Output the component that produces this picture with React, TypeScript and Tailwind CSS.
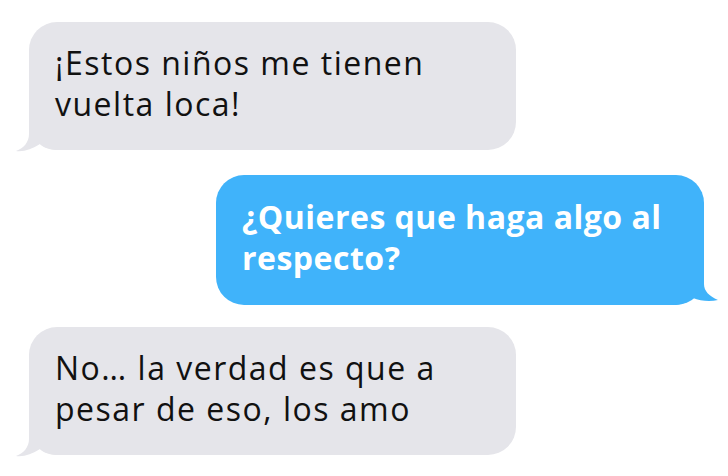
import React from "react";

const GrayTail = () => (
  <svg
    className="absolute left-[-15px] bottom-[-2px]"
    width="46"
    height="34"
    viewBox="0 0 46 34"
  >
    <path
      d="M15 0 L15 16 C15 24 10 30 2 33 C10 34 18 31 26 26 C30 30 36 32 46 32 L46 0 Z"
      fill="#e5e5ea"
    />
  </svg>
);

const BlueTail = () => (
  <svg
    className="absolute right-[-14px] bottom-0"
    width="46"
    height="34"
    viewBox="0 0 46 34"
  >
    <path
      d="M32 0 L32 13 C32 20 37 25 46 29 C38 31 28 30 21 27 C16 31 10 34 0 34 L0 0 Z"
      fill="#40b3fa"
    />
  </svg>
);

const Received = ({ lines, className }: { lines: string[]; className?: string }) => (
  <div
    className={`relative w-[487px] rounded-[28px] bg-[#e5e5ea] pl-[26px] pr-2 pt-[20px] pb-[26px] text-[32px] leading-[41px] tracking-[1.5px] text-[#111] ${className ?? ""}`}
  >
    <GrayTail />
    <p className="relative whitespace-nowrap">
      {lines[0]}
      <br />
      {lines[1]}
    </p>
  </div>
);

export default function App() {
  return (
    <div
      className="flex h-[476px] w-[728px] flex-col bg-white pl-[29px] pr-[24px] pt-[22px]"
      style={{ fontFamily: '"Open Sans", "Liberation Sans", sans-serif' }}
    >
      <Received lines={["¡Estos niños me tienen", "vuelta loca!"]} />

      <div className="relative mt-[25px] w-[488px] self-end rounded-[28px] bg-[#40b3fa] pl-[26px] pr-2 pt-[21px] pb-[27px] text-[32px] font-bold leading-[41px] tracking-[0.5px] text-white">
        <BlueTail />
        <p className="relative whitespace-nowrap">
          ¿Quieres que haga algo al
          <br />
          respecto?
        </p>
      </div>

      <Received
        className="mt-[22px]"
        lines={["No… la verdad es que a", "pesar de eso, los amo"]}
      />
    </div>
  );
}
